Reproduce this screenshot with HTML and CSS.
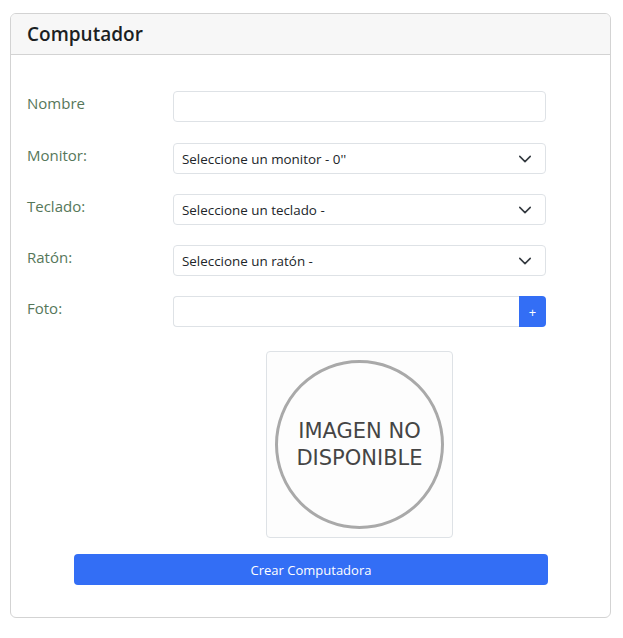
FILE: index.html
```html
<!DOCTYPE html>
<html lang="es">
<head>
<meta charset="utf-8">
<link rel="stylesheet" href="styles.css">
</head>
<body>
<div class="card">
  <div class="card-header">Computador</div>
  <div class="card-body">
    <div class="row first">
      <label class="lbl">Nombre</label>
      <div class="ctl"><div class="input"></div></div>
    </div>
    <div class="row">
      <label class="lbl">Monitor:</label>
      <div class="ctl"><div class="input select"><span>Seleccione un monitor - 0''</span>
        <svg class="chev" width="14" height="14" viewBox="0 0 16 16"><path d="M2 5l6 6 6-6" fill="none" stroke="#343a40" stroke-width="1.8" stroke-linecap="round" stroke-linejoin="round"/></svg></div></div>
    </div>
    <div class="row">
      <label class="lbl">Teclado:</label>
      <div class="ctl"><div class="input select"><span>Seleccione un teclado -</span>
        <svg class="chev" width="14" height="14" viewBox="0 0 16 16"><path d="M2 5l6 6 6-6" fill="none" stroke="#343a40" stroke-width="1.8" stroke-linecap="round" stroke-linejoin="round"/></svg></div></div>
    </div>
    <div class="row">
      <label class="lbl">Ratón:</label>
      <div class="ctl"><div class="input select"><span>Seleccione un ratón -</span>
        <svg class="chev" width="14" height="14" viewBox="0 0 16 16"><path d="M2 5l6 6 6-6" fill="none" stroke="#343a40" stroke-width="1.8" stroke-linecap="round" stroke-linejoin="round"/></svg></div></div>
    </div>
    <div class="row">
      <label class="lbl">Foto:</label>
      <div class="ctl group"><div class="input grow"></div><button class="plus">+</button></div>
    </div>
    <div class="row img-row">
      <div class="lbl"></div>
      <div class="ctl center">
        <div class="thumb">
          <div class="circle"><span>IMAGEN NO<br>DISPONIBLE</span></div>
        </div>
      </div>
    </div>
    <div class="submit-wrap"><button class="submit">Crear Computadora</button></div>
  </div>
</div>
</body>
</html>
```
FILE: styles.css
```css
* { box-sizing: border-box; }
html, body { margin: 0; background: #fff; }
body { padding: 13px 12px 0 10px; font-family: "Open Sans", "Noto Sans", sans-serif; color: #212529; }
.card { width: 601px; height: 605px; border: 1px solid #d3d3d3; border-radius: 6px; overflow: hidden; }
.card-header { height: 41px; background: #f7f7f7; border-bottom: 1px solid #d3d3d3; padding: 0 16px; font-size: 19px; font-weight: 600; line-height: 40px; color: #1b1f23; }
.card-body { padding: 36px 0 0 16px; }
.row { display: flex; align-items: flex-start; margin-bottom: 20px; }
.row.first { margin-bottom: 21px; }
.lbl { width: 146px; flex: none; font-size: 15px; color: #56775a; padding-top: 1px; line-height: 22px; }
.ctl { width: 373px; display: flex; }
.input { width: 100%; height: 31px; border: 1px solid #dee2e6; border-radius: 4px; background: #fff; }
.select { display: flex; align-items: center; justify-content: space-between; padding: 0 13px 0 8px; font-size: 13.4px; color: #212529; }
.chev { flex: none; }
.group .grow { flex: 1; border-radius: 4px 0 0 4px; border-right: none; }
.plus { width: 27px; height: 31px; border: none; background: #336ef5; color: #fff; border-radius: 0 4px 4px 0; font-size: 13px; padding: 0; font-family: inherit; }
.img-row { margin-top: 24px; margin-bottom: 16px; }
.center { justify-content: center; }
.thumb { width: 187px; height: 187px; border: 1px solid #dee2e6; border-radius: 4px; background: #fdfdfd; display: flex; align-items: center; justify-content: center; }
.circle { width: 169px; height: 169px; border: 3px solid #a9a9a9; border-radius: 50%; display: flex; align-items: center; justify-content: center; text-align: center; font-family: "DejaVu Sans", sans-serif; font-size: 21px; line-height: 27px; color: #454545; }
.submit-wrap { display: flex; padding-left: 47px; }
.submit { width: 474px; height: 31px; border: none; border-radius: 4px; background: #336ef5; color: #fff; font-size: 13px; font-family: inherit; }
```
